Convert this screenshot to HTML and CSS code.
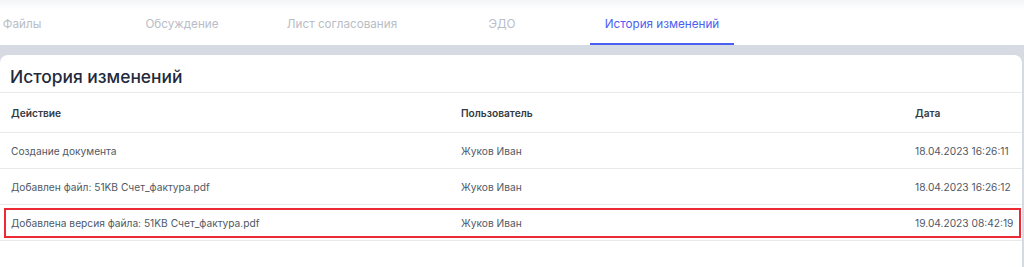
FILE: index.html
```html
<html>
<head>
<link rel="stylesheet" href="styles.css">
</head>
<body>

<div class="top-shade"></div>

<div class="tabs">
  <div class="tab">Файлы</div>
  <div class="tab">Обсуждение</div>
  <div class="tab">Лист согласования</div>
  <div class="tab">ЭДО</div>
  <div class="tab active">История изменений</div>
</div>

<div class="page">
  <div class="card">
    <h2 class="card-title">История изменений</h2>

    <div class="row head">
      <div>Действие</div>
      <div>Пользователь</div>
      <div>Дата</div>
    </div>

    <div class="row">
      <div>Создание документа</div>
      <div>Жуков Иван</div>
      <div>18.04.2023 16:26:11</div>
    </div>

    <div class="row">
      <div>Добавлен файл: 51KB Счет_фактура.pdf</div>
      <div>Жуков Иван</div>
      <div>18.04.2023 16:26:12</div>
    </div>

    <div class="row marked">
      <div>Добавлена версия файла: 51KB Счет_фактура.pdf</div>
      <div>Жуков Иван</div>
      <div>19.04.2023 08:42:19</div>
    </div>
  </div>
</div>

</body>
</html>
```

FILE: styles.css
```css
body       { margin:0; background:#fff; font-family:Inter, "Noto Sans", sans-serif; overflow:hidden }

.top-shade { height:10px; background:linear-gradient(#f3f4f5, #fff) }

.tabs      { display:flex; gap:16px; margin-left:-50px; height:35px }
.tab       { width:144px; text-align:center; font-size:11.7px; color:#b9bdc7;
             line-height:28px; box-sizing:border-box; border-bottom:2px solid transparent }
.tab.active { color:#4b5ef2; border-bottom-color:#4b5ef2 }

.page      { background:#d6dae3; padding-top:10px; padding-right:2px }
.card      { background:#fff; border-radius:8px 8px 0 0; height:212px }

.card-title { margin:0; padding:0 10px; height:38px; line-height:43px; box-sizing:border-box;
              font-size:17.4px; font-weight:500; color:#1f2a3c;
              border-bottom:1px solid #e8e9ec }

.row       { display:grid; grid-template-columns:450px 454px 1fr; align-items:center;
             height:36px; padding-left:11px; font-size:10.2px; color:#4f5866;
             border-bottom:1px solid #e8e9ec; box-sizing:border-box }
.row.head  { height:40px; font-weight:600; color:#333a44 }
.row.marked { position:relative }
.row.marked::after { content:""; position:absolute; left:4px; right:1px; top:3px; bottom:2px;
                     border:2px solid #ec2a33 }
```
